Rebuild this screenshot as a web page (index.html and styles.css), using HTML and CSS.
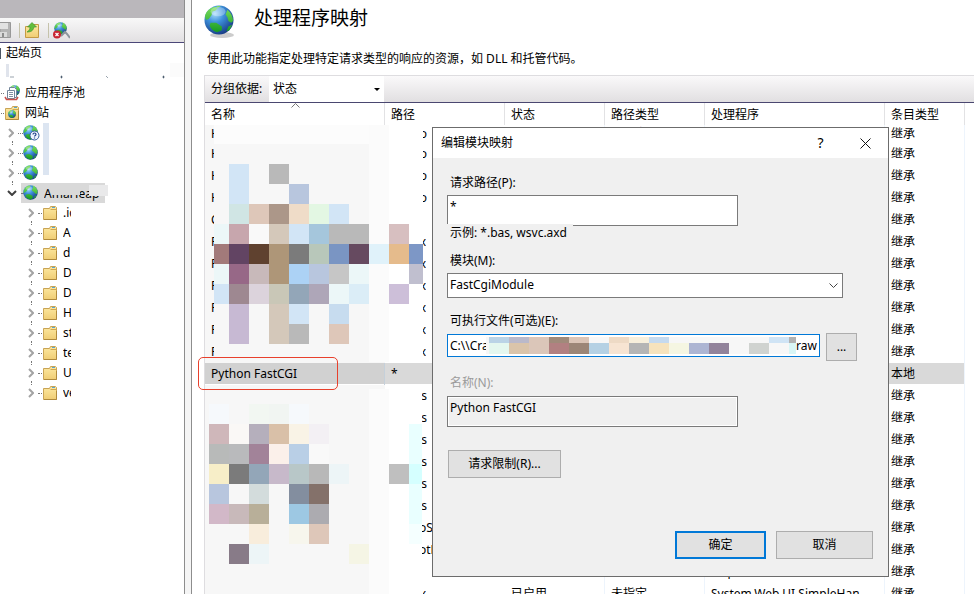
FILE: index.html
```html
<!DOCTYPE html>
<html lang="zh-CN">
<head>
<meta charset="utf-8">
<title>处理程序映射</title>
<link rel="stylesheet" href="styles.css">
</head>
<body>
<svg class="defs" aria-hidden="true">
  <defs>
    <radialGradient id="sea" cx="36%" cy="28%" r="75%">
      <stop offset="0" stop-color="#a9dcfb"/><stop offset=".4" stop-color="#3f92dc"/><stop offset="1" stop-color="#173c86"/>
    </radialGradient>
    <linearGradient id="land" x2="0" y2="1"><stop offset="0" stop-color="#7fe05e"/><stop offset="1" stop-color="#159a22"/></linearGradient>
    <linearGradient id="paper" x2="0" y2="1"><stop offset="0" stop-color="#fde9a2"/><stop offset="1" stop-color="#f0cd74"/></linearGradient>
    <symbol id="globe" viewBox="0 0 32 32">
      <circle cx="16" cy="16" r="15.500" fill="url(#sea)"/>
      <path d="M2 11C4 5 9 1 15 1l1 3-3 3-3 1-2 5-4 3-3 1zM20 1c6 1 10 6 11 12l-1 6-4-1-4-4-3-2 1-4 2-3zM7 20l6-1 7 4 1 4-4 4c-6 0-10-4-12-8zM25 24l4-3-3 6-3 2z" fill="url(#land)"/>
      <ellipse cx="13" cy="7" rx="7" ry="4" fill="#fff" opacity=".25"/>
    </symbol>
    <symbol id="bigglobe" viewBox="0 0 32 32">
      <circle cx="16" cy="16" r="15.500" fill="url(#sea)"/>
      <path d="M1 12C2 7 6 3 11 2l4 1-3 3-3 1-1 4-3 4-3 1zM13 1l5 0-3 2zM25 5c4 3 6 8 6 12l-2 2-3-2-1-4-2-3zM7 19l6 0 6 4 0 4-5 2c-4-1-7-4-8-7zM26 23l4-2-3 6-3 1z" fill="url(#land)"/>
      <ellipse cx="15" cy="7" rx="8" ry="5" fill="#fff" opacity=".3"/>
    </symbol>
    <symbol id="folder" viewBox="0 0 14 14">
      <path d="M.5 13.500V2.500h6l1-2h5l1 1v12z" fill="url(#paper)" stroke="#c9a456"/>
      <path d="M7.500 3.500h6" stroke="#d0a850"/><path d="M9 1.500h3" stroke="#5aa3cf"/><path d="M13.500 5v8.500H1" stroke="#b08a3c" fill="none"/>
    </symbol>
    <symbol id="chevron" viewBox="0 0 6 10"><path d="M1 1l4 4-4 4" fill="none" stroke="#a3a3a3" stroke-width="2"/></symbol>
  </defs>
</svg>

<aside class="sidebar">
  <div class="band"></div>
  <div class="toolbar">
    <button class="tool save" aria-label="保存"><svg width="12" height="16" viewBox="0 0 12 16"><path d="M0 .500h10.500v15H0z" fill="#b4b4b4" stroke="#989898"/><path d="M0 1h8v6H0z" fill="#e2e2e2"/><path d="M0 10h7v5H0z" fill="#dadada"/><path d="M2 11h2v4H2z" fill="#8c8c8c"/></svg></button>
    <span class="sep"></span>
    <button class="tool up" aria-label="向上"><svg width="16" height="16" viewBox="0 0 16 16"><path d="M1.500 15.500V4.500h6l2-2h5v13z" fill="url(#paper)" stroke="#c49a45"/><path d="M3 10c2-1 3-3 3-5H3.500L8 .5l4.500 4.500H10c-1 4-3 5-7 5z" fill="#62bd3c" stroke="#35902a" stroke-width=".6"/></svg></button>
    <span class="sep"></span>
    <button class="tool" aria-label="断开连接"><svg width="17" height="17" viewBox="0 0 17 17"><use href="#globe" x="1" width="13" height="13"/><path d="M8 14l4-4 2 2 3 4" fill="none" stroke="#8d969d" stroke-width="2"/><circle cx="4" cy="12.500" r="4" fill="#c92532"/><path d="M2.500 11l3 3m0-3l-3 3" stroke="#fff" stroke-width="1.200"/></svg></button>
  </div>
  <ul class="tree">
    <li class="node start"><svg class="edge" width="2" height="11"><path d="M0 0h1v11H0z" fill="#4c5664"/></svg>起始页</li>
    <li class="node server"><svg width="184" height="20" viewBox="0 0 184 20"><path d="M6 1h3v13H6z" fill="#e0e4ec"/><path d="M170-5h14v19h-14z" fill="#fbfbfb"/><path d="M10 14h4M61 13h1v2h-1zM106 13l2 2M163 13h1v2h-1z" fill="#456" stroke="#567" stroke-width=".6"/></svg></li>
    <li class="node level1"><svg width="22" height="18" viewBox="0 0 22 18"><path d="M1 9.500h4" stroke="#777" stroke-dasharray="1 1"/><use href="#globe" x="9" y="1" width="11" height="11"/><path d="M9.500 3.500h5l2 2v8h-7z" fill="#fafcff" stroke="#73859a"/><path d="M7.500 6.500h7v8h-7z" fill="#fff" stroke="#73859a"/><path d="M9 8.500h4m-4 2h4m-4 2h4" stroke="#8190a4"/><path d="M5 13l1.500 2.500h10L18 13" fill="none" stroke="#c8504a" stroke-width="1.500"/></svg>应用程序池</li>
    <li class="node level1"><svg width="22" height="18" viewBox="0 0 22 18"><path d="M1 9.500h4" stroke="#777" stroke-dasharray="1 1"/><use href="#folder" x="5" y="2" width="14" height="14"/><use href="#globe" x="8" y="6" width="8" height="8"/></svg>网站</li>
    <li class="node site"><svg class="chev"><use href="#chevron"/></svg><span class="dots"></span><svg width="17" height="16" viewBox="0 0 17 16"><use href="#globe" width="15" height="15"/><circle cx="11.500" cy="10.500" r="4.500" fill="#eef5ff" stroke="#315a9d"/><path d="M10 9.500c0-2 3-2 3 0 0 1-1.500 1-1.500 2M11.500 12.500v1" fill="none" stroke="#203f8a" stroke-width="1.200"/></svg><i class="veil"></i></li>
    <li class="node site"><svg class="chev"><use href="#chevron"/></svg><span class="dots"></span><svg width="17" height="16"><use href="#globe" width="15" height="15"/></svg><i class="veil"></i></li>
    <li class="node site"><svg class="chev"><use href="#chevron"/></svg><span class="dots"></span><svg width="17" height="16"><use href="#globe" width="15" height="15"/></svg><i class="veil short"></i></li>
    <li class="node site open"><svg class="down" width="10" height="6" viewBox="0 0 10 6"><path d="M1 1l4 4 4-4" fill="none" stroke="#404040" stroke-width="2"/></svg><div class="picked"><span class="dots"></span><svg width="17" height="16"><use href="#globe" width="15" height="15"/></svg><span class="sitename">AmaHeap</span><i class="mask"></i><i class="patch"></i></div></li>
    <li class="node sub"><svg class="chev"><use href="#chevron"/></svg><span class="dots"></span><svg class="fold"><use href="#folder"/></svg><span class="cut">.id</span></li>
    <li class="node sub"><svg class="chev"><use href="#chevron"/></svg><span class="dots"></span><svg class="fold"><use href="#folder"/></svg><span class="cut">A</span></li>
    <li class="node sub"><svg class="chev"><use href="#chevron"/></svg><span class="dots"></span><svg class="fold"><use href="#folder"/></svg><span class="cut">d</span></li>
    <li class="node sub"><svg class="chev"><use href="#chevron"/></svg><span class="dots"></span><svg class="fold"><use href="#folder"/></svg><span class="cut">D</span></li>
    <li class="node sub"><svg class="chev"><use href="#chevron"/></svg><span class="dots"></span><svg class="fold"><use href="#folder"/></svg><span class="cut">D</span></li>
    <li class="node sub"><svg class="chev"><use href="#chevron"/></svg><span class="dots"></span><svg class="fold"><use href="#folder"/></svg><span class="cut">H</span></li>
    <li class="node sub"><svg class="chev"><use href="#chevron"/></svg><span class="dots"></span><svg class="fold"><use href="#folder"/></svg><span class="cut">st</span></li>
    <li class="node sub"><svg class="chev"><use href="#chevron"/></svg><span class="dots"></span><svg class="fold"><use href="#folder"/></svg><span class="cut">te</span></li>
    <li class="node sub"><svg class="chev"><use href="#chevron"/></svg><span class="dots"></span><svg class="fold"><use href="#folder"/></svg><span class="cut">U</span></li>
    <li class="node sub"><svg class="chev"><use href="#chevron"/></svg><span class="dots"></span><svg class="fold"><use href="#folder"/></svg><span class="cut">ve</span></li>
  </ul>
</aside>
<div class="splitter"></div>

<main class="content">
  <header class="heading">
    <svg width="32" height="34" viewBox="0 0 32 34"><ellipse cx="18" cy="30" rx="12" ry="3" fill="#999" opacity=".5"/><use href="#bigglobe" width="30" height="30"/></svg>
    <h1>处理程序映射</h1>
  </header>
  <p class="intro">使用此功能指定处理特定请求类型的响应的资源，如 DLL 和托管代码。</p>
  <section class="list">
    <div class="groupbar">
      <label for="group">分组依据:</label>
      <div class="groupselect">
        <select id="group"><option>状态</option></select>
        <svg width="6" height="3" viewBox="0 0 6 3"><path d="M0 0h6L3 3z"/></svg>
      </div>
    </div>
    <table>
      <colgroup><col class="w180"><col class="w120"><col class="w100"><col class="w100"><col class="w180"><col class="w80"><col></colgroup>
      <thead><tr><th>名称<svg class="sort" width="9" height="5" viewBox="0 0 9 5"><path d="M.5 4.500l4-4 4 4" fill="none" stroke="#777"/></svg></th><th>路径</th><th>状态</th><th>路径类型</th><th>处理程序</th><th>条目类型</th><th class="rest"></th></tr></thead>
      <tbody>
        <tr class="first"><td><span class="head">H</span></td><td><span class="tail">o</span></td><td><div>已启用</div></td><td><div>未指定</div></td><td><div>IsapiModule</div></td><td><div>继承</div></td><td></td></tr>
        <tr><td><span class="head">H</span></td><td><span class="tail">o</span></td><td></td><td></td><td></td><td>继承</td><td></td></tr>
        <tr><td><span class="head">H</span></td><td><span class="tail">o</span></td><td></td><td></td><td></td><td>继承</td><td></td></tr>
        <tr><td><span class="head">H</span></td><td><span class="tail">o</span></td><td></td><td></td><td></td><td>继承</td><td></td></tr>
        <tr><td><span class="head">C</span></td><td></td><td></td><td></td><td></td><td>继承</td><td></td></tr>
        <tr><td><span class="head">P</span></td><td><span class="tail thin">x</span></td><td></td><td></td><td></td><td>继承</td><td></td></tr>
        <tr><td><span class="head">P</span></td><td><span class="tail thin">x</span></td><td></td><td></td><td></td><td>继承</td><td></td></tr>
        <tr><td><span class="head">P</span></td><td><span class="tail thin">x</span></td><td></td><td></td><td></td><td>继承</td><td></td></tr>
        <tr><td><span class="head">P</span></td><td><span class="tail thin">x</span></td><td></td><td></td><td></td><td>继承</td><td></td></tr>
        <tr><td><span class="head">P</span></td><td><span class="tail thin">x</span></td><td></td><td></td><td></td><td>继承</td><td></td></tr>
        <tr><td><span class="head">P</span></td><td><span class="tail thin">x</span></td><td></td><td></td><td></td><td>继承</td><td></td></tr>
        <tr class="selected"><td>Python FastCGI</td><td>*</td><td></td><td></td><td></td><td>本地</td><td class="rest"></td></tr>
        <tr><td></td><td><span class="tail full">s</span></td><td></td><td></td><td></td><td>继承</td><td></td></tr>
        <tr><td></td><td><span class="tail full">s</span></td><td></td><td></td><td></td><td>继承</td><td></td></tr>
        <tr><td></td><td><span class="tail full">s</span></td><td></td><td></td><td></td><td>继承</td><td></td></tr>
        <tr><td></td><td><span class="tail full">s</span></td><td></td><td></td><td></td><td>继承</td><td></td></tr>
        <tr><td></td><td><span class="tail full">s</span></td><td></td><td></td><td></td><td>继承</td><td></td></tr>
        <tr><td></td><td><span class="tail full">s</span></td><td></td><td></td><td></td><td>继承</td><td></td></tr>
        <tr><td></td><td><span class="tail long">oS</span></td><td></td><td></td><td></td><td>继承</td><td></td></tr>
        <tr><td></td><td><span class="tail long">otF</span></td><td></td><td></td><td></td><td>继承</td><td></td></tr>
        <tr><td></td><td></td><td>已启用</td><td>未指定</td><td>IsapiModule</td><td>继承</td><td></td></tr>
        <tr><td></td><td><span class="tail thin">x</span></td><td>已启用</td><td>未指定</td><td>System.Web.UI.SimpleHan</td><td>继承</td><td></td></tr>
      </tbody>
    </table>
    <svg class="mosaic" width="222" height="469" viewBox="205 125 222 469" shape-rendering="crispEdges" aria-hidden="true">
      <path d="M214 125h155v19H214z" fill="#fcfcfc"/><path d="M369 125h20v237h-20zM369 389h20v205h-20z" fill="#fbfbfb"/>
      <g fill="#d2e5f6"><path d="M229 164h20v40h-20zM329 204h20v20h-20zM289 224h20v20h-20zM214 284h15v20h-15zM289 304h20v20h-20z"/></g>
      <g fill="#b9b9b9"><path d="M269 164h20v20h-20zM329 224h40v20h-40zM289 324h20v20h-20z"/></g>
      <g fill="#b8c6de"><path d="M289 184h20v20h-20zM309 264h20v20h-20zM209 484h20v20h-20z"/></g>
      <g fill="#dec7b9"><path d="M249 204h20v20h-20zM329 324h20v20h-20zM309 524h20v20h-20z"/></g>
      <g fill="#ecf7f8"><path d="M214 224h15v20h-15zM214 264h15v20h-15zM349 264h20v20h-20zM329 284h20v20h-20z"/></g>
      <g fill="#d4c8ba"><path d="M269 224h20v20h-20zM269 304h20v40h-20z"/></g>
      <path d="M229 204h20v20h-20z" fill="#d0e5e4"/><path d="M269 204h20v20h-20z" fill="#ac9789"/><path d="M289 204h20v20h-20z" fill="#efdcc8"/><path d="M309 204h20v20h-20z" fill="#e3f7e3"/>
      <path d="M229 224h20v20h-20z" fill="#c7a6ad"/><path d="M249 224h20v20h-20z" fill="#f9f9f9"/><path d="M309 224h20v20h-20z" fill="#a5c6dc"/><path d="M389 224h20v20h-20z" fill="#d7bfc0"/>
      <path d="M214 244h15v20h-15z" fill="#a27a7a"/><path d="M229 244h20v20h-20z" fill="#624463"/><path d="M249 244h20v20h-20z" fill="#5f412f"/><path d="M269 244h20v40h-20z" fill="#ae9678"/><path d="M289 244h20v20h-20z" fill="#7b7b7b"/><path d="M309 244h20v20h-20z" fill="#b8c7ba"/><path d="M329 244h20v20h-20z" fill="#7a95c3"/><path d="M349 244h20v20h-20z" fill="#664a60"/><path d="M369 244h20v20h-20z" fill="#e0f2fa"/><path d="M389 244h20v20h-20z" fill="#e5bb8c"/><path d="M409 244h14v20h-14z" fill="#7d97c6"/>
      <path d="M229 264h20v20h-20z" fill="#976887"/><path d="M249 264h20v20h-20z" fill="#c8b9ba"/><path d="M289 264h20v20h-20z" fill="#acd2f5"/><path d="M329 264h20v20h-20z" fill="#c6c6c6"/><path d="M409 264h14v20h-14z" fill="#c0bfcf"/>
      <path d="M229 284h20v20h-20z" fill="#9e8891"/><path d="M249 284h20v20h-20z" fill="#dcd3dc"/><path d="M269 284h20v20h-20z" fill="#c9c7b7"/><path d="M289 284h20v20h-20z" fill="#93a6b8"/><path d="M309 284h20v20h-20z" fill="#aea6b8"/><path d="M349 284h20v20h-20z" fill="#dbedf7"/><path d="M389 284h20v20h-20z" fill="#cdbfd9"/>
      <path d="M229 304h20v40h-20z" fill="#c7b9d3"/><path d="M329 304h20v20h-20z" fill="#c7dcef"/>
      <path d="M209 404h20v20h-20zM289 404h20v20h-20z" fill="#f6f9fc"/><path d="M249 404h20v20h-20z" fill="#f2f7f2"/><path d="M269 404h20v20h-20z" fill="#f1f5f2"/>
      <path d="M209 424h20v20h-20z" fill="#cfb7ba"/><path d="M229 424h20v20h-20z" fill="#faf8f6"/><path d="M249 424h20v20h-20z" fill="#b5afbc"/><path d="M269 424h20v20h-20z" fill="#d9c0a8"/><path d="M289 424h20v20h-20z" fill="#f9f3e6"/><path d="M309 424h20v20h-20z" fill="#f3f0f4"/>
      <path d="M209 444h20v20h-20z" fill="#b8bab9"/><path d="M229 444h20v20h-20z" fill="#b9babc"/><path d="M249 444h20v20h-20z" fill="#a28399"/><path d="M269 444h20v20h-20z" fill="#fbf0ea"/><path d="M289 444h20v20h-20z" fill="#b9cfe6"/><path d="M309 444h20v20h-20z" fill="#f9f9f9"/>
      <path d="M209 464h20v20h-20z" fill="#f7eec8"/><path d="M229 464h20v20h-20z" fill="#7b7b7b"/><path d="M249 464h20v20h-20z" fill="#93a6b8"/><path d="M269 464h20v20h-20z" fill="#c7b9ca"/><path d="M289 464h20v20h-20z" fill="#b8c7c8"/><path d="M309 464h20v20h-20z" fill="#b8b8b8"/><path d="M329 464h20v20h-20zM249 544h20v20h-20z" fill="#edf5f7"/><path d="M389 464h20v20h-20z" fill="#bfbfbf"/>
      <path d="M249 484h20v20h-20z" fill="#d3dcdc"/><path d="M289 484h20v20h-20z" fill="#838e9f"/><path d="M309 484h20v20h-20z" fill="#84716a"/>
      <path d="M209 504h20v20h-20z" fill="#d2b8c8"/><path d="M229 504h20v20h-20z" fill="#c8b9ba"/><path d="M249 504h20v20h-20z" fill="#b8af99"/><path d="M289 504h20v20h-20z" fill="#9dc8e3"/><path d="M309 504h20v20h-20z" fill="#acabb0"/>
      <path d="M249 524h20v20h-20z" fill="#f8eddc"/><path d="M289 524h20v20h-20z" fill="#f7f6ed"/><path d="M229 544h20v20h-20z" fill="#887b88"/><path d="M349 544h20v20h-20z" fill="#f5f5e5"/>
      <path d="M409 424h13v40h-13zM409 484h13v40h-13z" fill="#e9ffff"/><path d="M409 464h13v20h-13z" fill="#d5ffff"/><path d="M409 524h13v20h-13z" fill="#f5ffff"/>
    </svg>
    <div class="callout"></div>
  </section>
</main>

<form class="dialog" role="dialog" aria-labelledby="dlgtitle">
  <div class="titlebar"><h2 id="dlgtitle">编辑模块映射</h2>
    <button type="button" class="cap" aria-label="帮助">?</button>
    <button type="button" class="cap" aria-label="关闭"><svg width="11" height="11" viewBox="0 0 11 11"><path d="M.5.500l10 10m0-10l-10 10" stroke="#111" fill="none"/></svg></button>
  </div>
  <div class="fields">
    <label for="req">请求路径(P):</label>
    <input id="req" class="tall" type="text" value="*">
    <p class="sample">示例: *.bas, wsvc.axd</p>
    <label for="mod" class="gap10">模块(M):</label>
    <div class="combo"><select id="mod"><option>FastCgiModule</option></select><svg width="9" height="6" viewBox="0 0 9 6"><path d="M.5.500l4 4 4-4" fill="none" stroke="#444"/></svg></div>
    <label for="exe" class="gap14">可执行文件(可选)(E):</label>
    <div class="exerow">
      <div class="exe">
        <input id="exe" type="text" value="C:\\Cra">
        <svg width="310" height="17" viewBox="486 338 310 17" shape-rendering="crispEdges" aria-hidden="true">
          <path d="M486 338h310v17H486z" fill="#f7f7f7"/>
          <path d="M489 338h20v6h-20z" fill="#bad3e6"/><path d="M509 338h20v6h-20z" fill="#bab9ca"/><path d="M529 338h20v17h-20z" fill="#dbc6b9"/><path d="M549 338h20v6h-20z" fill="#a08a7a"/><path d="M569 338h20v6h-20z" fill="#dbc5b7"/><path d="M609 338h20v6h-20z" fill="#eedac5"/><path d="M629 338h20v6h-20z" fill="#f7efdc"/><path d="M649 338h20v6h-20z" fill="#c5daef"/><path d="M769 338h20v6h-20z" fill="#d0e4f5"/><path d="M789 338h7v6h-7z" fill="#b2b2b2"/>
          <path d="M489 344h20v11h-20z" fill="#e4f7ef"/><path d="M509 344h20v11h-20z" fill="#dac4aa"/><path d="M549 344h20v11h-20z" fill="#b28081"/><path d="M569 344h20v11h-20z" fill="#9c8677"/><path d="M589 344h20v11h-20z" fill="#b5d1e4"/><path d="M609 344h20v11h-20z" fill="#f7e4d2"/><path d="M629 344h20v11h-20z" fill="#b5b5b5"/><path d="M649 344h20v11h-20z" fill="#f6e3bd"/><path d="M669 344h20v11h-20z" fill="#f5f6e2"/><path d="M689 344h20v11h-20z" fill="#adb5d3"/><path d="M709 344h20v11h-20z" fill="#92839b"/><path d="M749 344h20v11h-20z" fill="#d0d3d0"/><path d="M789 344h7v11h-7z" fill="#d9f6f6"/>
        </svg>
        <span>raw</span>
      </div>
      <button type="button" class="browse">...</button>
    </div>
    <label for="nm" class="gap13 off">名称(N):</label>
    <input id="nm" class="tall locked" type="text" value="Python FastCGI" readonly>
    <button type="button" class="limits">请求限制(R)...</button>
    <div class="actions"><button type="button" class="ok">确定</button><button type="button" class="cancel">取消</button></div>
  </div>
</form>
</body>
</html>
```
FILE: styles.css
```css
* { box-sizing: border-box; }
body {
  margin: 0;
  height: 100vh;
  display: flex;
  overflow: hidden;
  position: relative;
  background: #fff;
  color: #000;
  font: 12px/18px "Noto Sans", "Noto Sans CJK SC", sans-serif;
}
button, input, select { font: inherit; color: inherit; margin: 0; border-radius: 0; outline: 0; }
svg { display: block; flex: none; }
.defs { position: absolute; width: 0; height: 0; }

.sidebar { width: 184px; flex: none; overflow: hidden; }
.band { height: 18px; background: #bab7bb; }
.toolbar {
  height: 25px;
  display: flex;
  align-items: center;
  gap: 4px;
  background: linear-gradient(#f8f8f8, #e2e0e2);
  border-bottom: 1px solid #4b4778;
}
.tool { border: 0; padding: 0; background: none; }
.tool.save { width: 15px; }
.tool.up { width: 20px; }
.sep { width: 1px; height: 15px; background: #c5c2aa; }
.tree { list-style: none; margin: 0; padding: 0; }
.node { height: 20px; display: flex; align-items: center; position: relative; }
.start { gap: 4px; }
.level1 { gap: 3px; }
.site { padding-left: 8px; }
.sub { padding-left: 28px; }
.chev { width: 6px; height: 10px; }
.dots { width: 6px; margin-left: 4px; border-top: 1px dotted #777; }
.site .dots { width: 5px; }
.site:not(.open)::after, .sub::after {
  content: "";
  position: absolute;
  left: 12px;
  bottom: -2px;
  height: 4px;
  border-left: 1px dotted #777;
}
.sub::after { left: 31px; }
.node:last-child::after { display: none; }
.veil { width: 6px; height: 20px; margin-left: 3px; background: #dce5f1; }
.veil.short { height: 12px; align-self: flex-start; }
.open { padding-left: 7px; gap: 4px; }
.picked { display: flex; align-items: center; width: 84px; height: 20px; background: #d9d9d9; }
.picked .dots { width: 2px; margin-left: 0; }
.sitename { margin-left: 4px; height: 16px; line-height: 18px; overflow: hidden; }
.mask { position: absolute; left: 52px; top: 2px; width: 28px; height: 10px; background: #d9d9d9; }
.patch { position: absolute; left: 89px; top: 2px; width: 19px; height: 11px; background: #e9e9ea; }
.fold { width: 14px; height: 14px; margin: 0 6px 0 1px; }
.sub .dots { width: 4px; }
.cut { width: 8px; overflow: hidden; white-space: nowrap; }

.splitter { width: 8px; flex: none; background: #f5f5f5; border: 1px solid #8d8d8d; border-width: 0 1px; }

.content { flex: 1; min-width: 0; }
.heading { display: flex; align-items: flex-start; gap: 18px; padding: 5px 0 0 12px; height: 50px; }
h1 { margin: 0; font-size: 19px; line-height: 26px; font-weight: 400; }
.intro { margin: 0 0 7px; padding-left: 15px; white-space: nowrap; }
.list { margin-left: 12px; border: 1px solid #dedde0; border-width: 1px 0 0 1px; position: relative; }
.groupbar {
  height: 27px;
  display: flex;
  align-items: center;
  background: linear-gradient(#faf9fa, #e1dfe1);
  border-bottom: 1px solid #4a4770;
}
.groupbar label { width: 64px; padding-left: 6px; white-space: nowrap; }
.groupselect { display: flex; align-items: center; width: 115px; height: 26px; background: #fff; }
.groupselect select, .combo select { appearance: none; border: 0; background: transparent; flex: 1; height: 100%; padding: 0 4px; }
.groupselect svg { margin-right: 4px; }

table { width: 100%; table-layout: fixed; border-collapse: separate; border-spacing: 0; }
.w180 { width: 180px; }
.w120 { width: 120px; }
.w100 { width: 100px; }
.w80 { width: 80px; }
th, td { height: 22px; padding: 0 0 0 6px; text-align: left; font-weight: 400; white-space: nowrap; overflow: hidden; border-right: 1px solid #edf4fc; line-height: 18px; }
th { border-right-color: #e2e2e4; position: relative; padding-top: 1px; }
th:last-child, td:last-child { border-right: 0; }
td:first-child { background: #f7f7f7; border-right-color: #f7f7f7; }
td:nth-child(2) { border-right-color: #fff; }
.sort { position: absolute; left: 86px; top: 0; }
.first td { height: 18px; line-height: 14px; }
.selected td { background: linear-gradient(#d9d9d9, #d9d9d9) no-repeat 0 0 / 100% 21px; }
.selected td:first-child { background: linear-gradient(#d1d1d1, #d1d1d1) no-repeat 0 0 / 100% 21px; border-right-color: #c5d0da; }
.selected td.rest { background: none; }
.head { display: block; width: 3px; overflow: hidden; }
.tail { display: flex; justify-content: flex-end; width: 4px; margin-left: 32px; overflow: hidden; }
.tail.thin { width: 3px; }
.tail.full { width: 5px; margin-left: 31px; }
.tail.long { width: 16px; margin-left: 31px; justify-content: flex-start; text-indent: -3px; }
.mosaic { position: absolute; left: 0; top: 49px; }
.callout { position: absolute; left: -7px; top: 281px; width: 140px; height: 33px; border: 1px solid #e8402c; border-radius: 5px; }

.dialog { position: absolute; left: 432px; top: 127px; width: 457px; background: #f0f0f0; border: 1px solid #6c6c6c; }
.titlebar { height: 30px; display: flex; align-items: center; background: #fff; padding-left: 8px; }
h2 { flex: 1; margin: 0; font-size: 12px; line-height: 18px; font-weight: 400; }
.cap { width: 45px; height: 28px; padding: 0; border: 0; background: none; display: flex; align-items: center; justify-content: center; font-size: 14px; }
.fields { padding: 16px 15px 17px 14px; }
.fields > label { display: block; padding-left: 3px; margin-bottom: 3px; }
.fields > .gap10 { margin-top: 10px; }
.fields > .gap14 { margin-top: 14px; }
.fields > .gap13 { margin: 13px 0 4px; }
.off { color: #9b9b9b; }
.tall { display: block; width: 291px; height: 31px; border: 1px solid #7a7a7a; background: #fff; padding: 0 2px 9px; }
.locked { background: #f0f0f0; box-shadow: inset 0 0 0 1px #fff; }
.sample { position: relative; width: 126px; margin: -2px 0 0; padding-left: 3px; background: #f0f0f0; white-space: nowrap; }
.combo { display: flex; align-items: center; width: 396px; height: 25px; background: #fff; border: 1px solid #7a7a7a; }
.combo select { padding: 0 2px 2px; }
.combo svg { margin-right: 4px; }
.exerow { display: flex; gap: 6px; }
.exe { display: flex; align-items: center; width: 373px; height: 23px; margin-top: 1px; border: 1px solid #0078d7; background: #fff; }
.exe input { width: 38px; height: 21px; border: 0; padding: 0 0 0 2px; background: none; }
.exe span { flex: 1; }
.fields button { height: 28px; padding: 0; border: 1px solid #adadad; background: #e1e1e1; }
.fields .browse { width: 31px; }
.fields .limits { display: block; width: 113px; margin: 23px 0 53px 1px; }
.actions { display: flex; justify-content: flex-end; gap: 10px; }
.fields .ok { width: 91px; border: 2px solid #0078d7; }
.fields .cancel { width: 97px; }
```
